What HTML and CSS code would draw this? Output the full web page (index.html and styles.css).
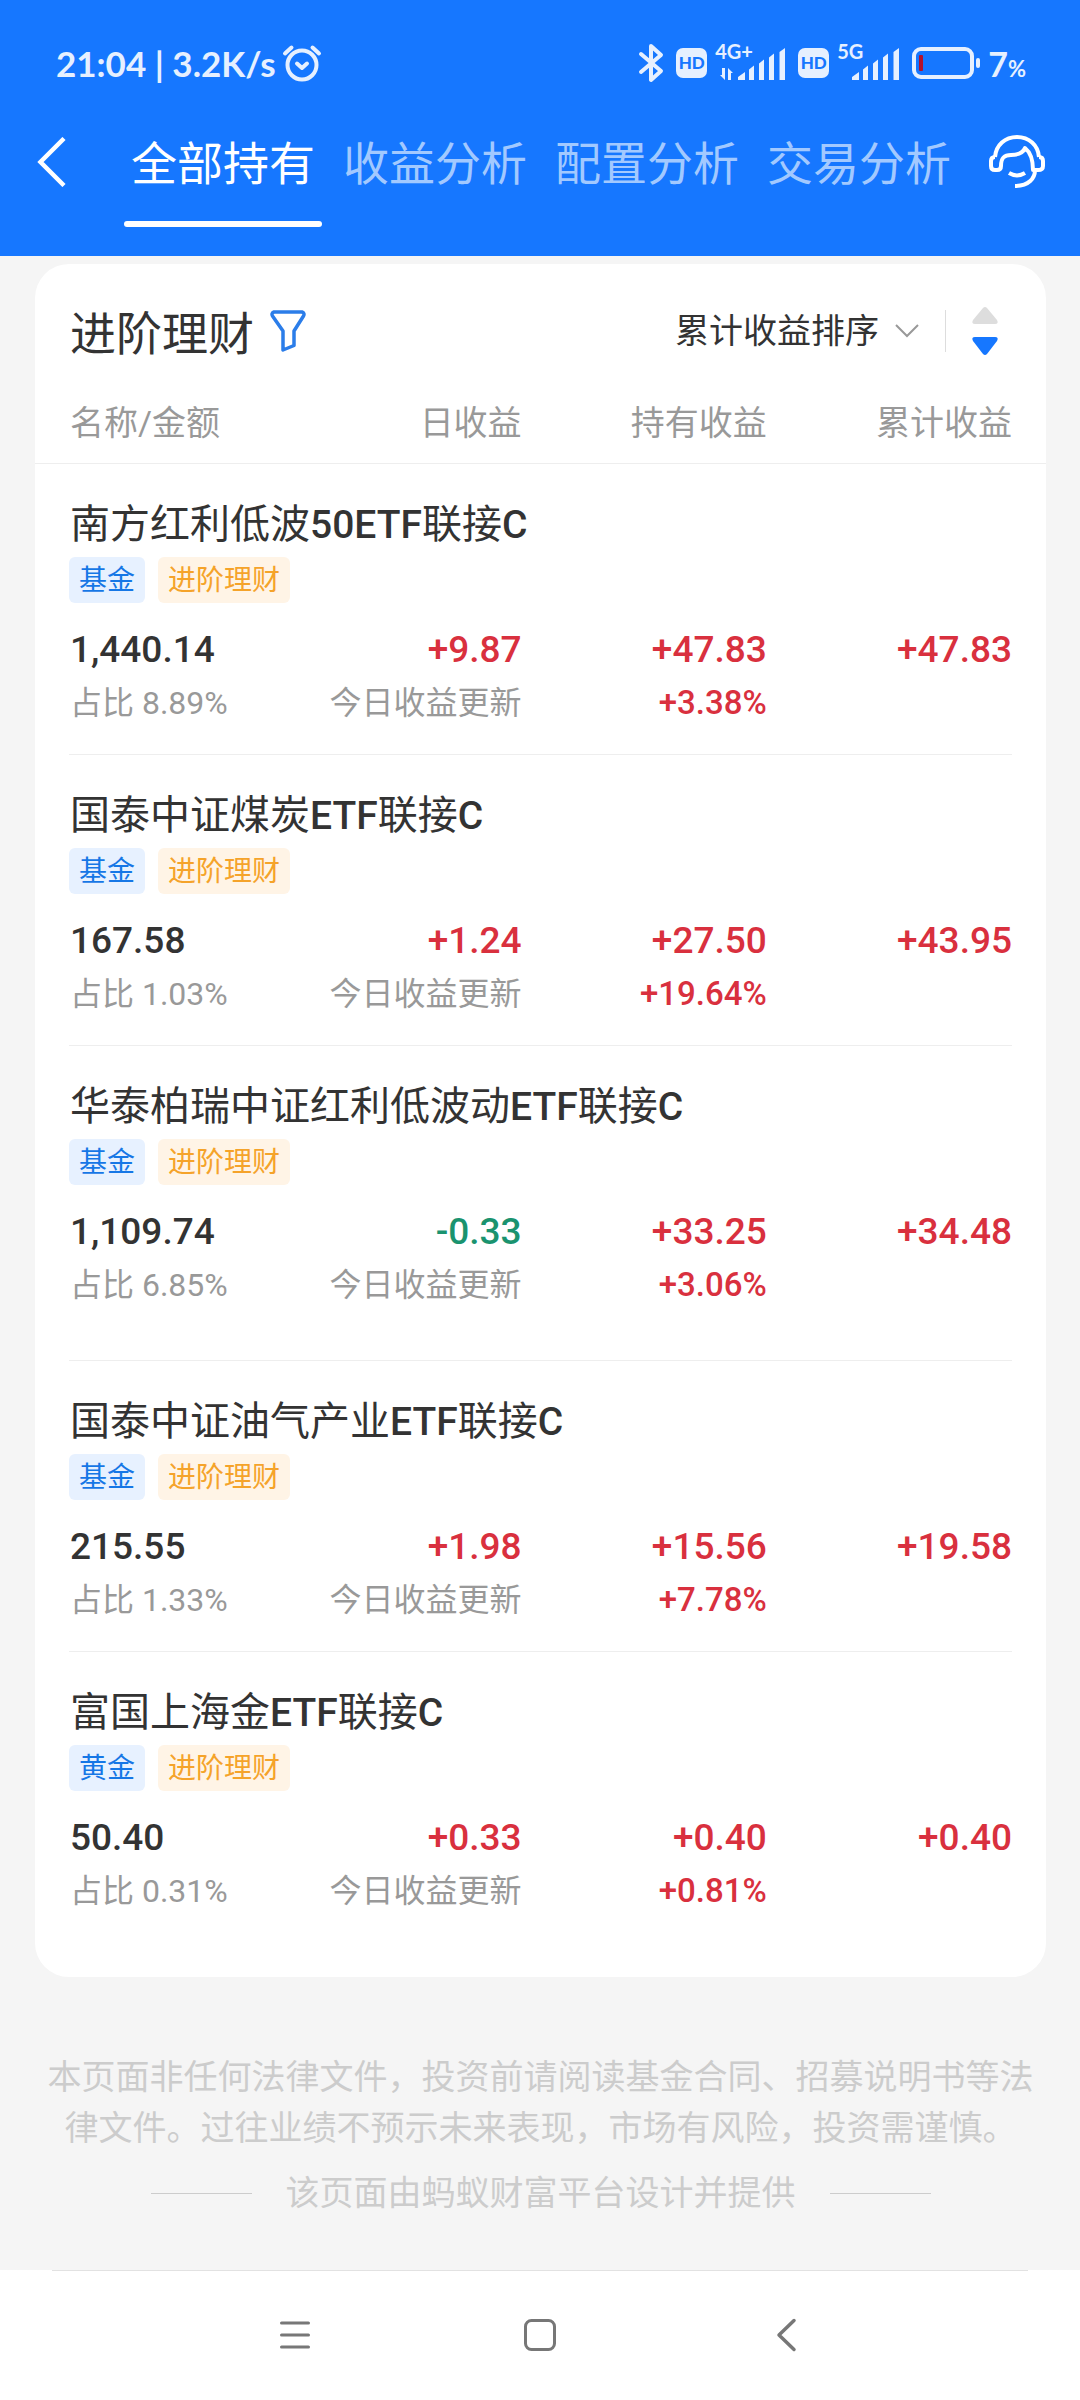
FILE: index.html
```html
<!DOCTYPE html>
<html lang="zh-CN">
<head>
<meta charset="utf-8">
<meta name="viewport" content="width=device-width">
<title>全部持有</title>
<link rel="stylesheet" href="styles.css">
</head>
<body>
<header class="top">
  <div class="status">
    <span class="status-time">21:04 | 3.2K/s</span>
    <svg class="status-alarm" width="40" height="40" viewBox="0 0 40 40" fill="none" stroke="currentColor" stroke-width="4" stroke-linecap="round" stroke-linejoin="round"><circle cx="20" cy="22" r="14.5"/><path d="M15 20.500l5 4.500 5-4.500"/><path d="M3 10.500l6.500-6M37 10.500l-6.500-6"/></svg>
    <div class="status-right">
      <svg width="26" height="40" viewBox="0 0 26 40" fill="none" stroke="currentColor" stroke-width="4" stroke-linejoin="round" stroke-linecap="round"><path d="M3 11l20 17-10 9V3l10 9L3 29"/></svg>
      <span class="hd">HD</span>
      <span class="signal">
        <span class="net">4G+</span>
        <svg width="71" height="34" viewBox="0 0 71 34" fill="currentColor"><path d="M7 22h3v12l-5-5h2zM13 34V22l5 5h-2v7z"/><path d="M23 34v-3l7-5v8zM34 23.500l5-4V34h-5zM44 17.500l5-4V34h-5zM54 11.500l5-4V34h-5zM64.500 6l5.500-4V34h-5.500z"/></svg>
      </span>
      <span class="hd">HD</span>
      <span class="signal">
        <span class="net">5G</span>
        <svg width="63" height="34" viewBox="0 0 63 34" fill="currentColor"><path d="M15 34v-3l7-5v8zM26 23.500l5-4V34h-5zM36 17.500l5-4V34h-5zM46 11.500l5-4V34h-5zM56.500 6l5.500-4V34h-5.500z"/></svg>
      </span>
      <svg class="battery" width="70" height="32" viewBox="0 0 70 32"><rect x="2" y="2" width="58" height="28" rx="7" fill="none" stroke="currentColor" stroke-width="4"/><rect x="7" y="8" width="4" height="16" rx="1" fill="#b3122d"/><rect x="64" y="11" width="4" height="10" rx="2" fill="currentColor"/></svg>
      <span class="level">7<small>%</small></span>
    </div>
  </div>
  <nav class="tabs">
    <button class="icon-btn" aria-label="返回"><svg width="30" height="50" viewBox="0 0 30 50" fill="none" stroke="currentColor" stroke-width="4.500"><path d="M27 1.500L3.500 25 27 48.500"/></svg></button>
    <div class="tab-list">
      <a class="tab active" href="#all">全部持有</a>
      <a class="tab" href="#profit">收益分析</a>
      <a class="tab" href="#allocation">配置分析</a>
      <a class="tab" href="#trade">交易分析</a>
    </div>
    <button class="icon-btn" aria-label="客服"><svg width="58" height="56" viewBox="8 10 58 56" fill="none" stroke="currentColor" stroke-width="4" stroke-linejoin="round"><path d="M15 33C16 21 25 13 37 13s21 8 22 20"/><path d="M15 33c-3 0-4 2-4 4v5c0 3 2 4 4 4h2c3 0 4-2 4-4 0-8 3-11 10-11 8 0 12-2 14-7 5 4 8 10 8 22h5c3 0 5-1 5-4v-5c0-2-1-4-4-4"/><path d="M55 46c0 8-6 16-20 16"/><path d="M29 49c5 3 11 3 16 0"/></svg></button>
  </nav>
</header>

<main class="main">
  <section class="card">
    <div class="card-head">
      <h1 class="card-title">进阶理财</h1>
      <button class="icon-btn filter" aria-label="筛选"><svg width="36" height="44" viewBox="0 0 36 44" fill="none" stroke="currentColor" stroke-width="3.500" stroke-linejoin="round"><path d="M4 3h28q3 1 1.500 4L24 22v14.500L13 41V22L2.500 7Q1 4 4 3z"/></svg></button>
      <button class="sort">累计收益排序<svg width="24" height="14" viewBox="0 0 24 14" fill="none" stroke="#999" stroke-width="2"><path d="M1 1l11 11L23 1"/></svg></button>
      <button class="icon-btn order" aria-label="降序"><svg width="28" height="50" viewBox="0 0 28 50"><path d="M12 2q2-2 4 0l10 12q2 4-2 4H4q-4 0-2-4z" fill="#ddd"/><path d="M12 48q2 2 4 0l10-13q2-4-2-4H4q-4 0-2 4z" fill="#1677ff"/></svg></button>
    </div>
    <table class="funds">
      <thead>
        <tr><th scope="col">名称/金额</th><th scope="col">日收益</th><th scope="col">持有收益</th><th scope="col">累计收益</th></tr>
      </thead>
      <tbody>
        <tr class="name"><th scope="rowgroup" colspan="4">南方红利低波<b>50ETF</b>联接<b>C</b><span class="tags"><span class="tag">基金</span><span class="tag gold">进阶理财</span></span></th></tr>
        <tr><td>1,440.14<small>占比 8.89%</small></td><td class="up">+9.87<small>今日收益更新</small></td><td class="up">+47.83<strong>+3.38%</strong></td><td class="up">+47.83</td></tr>
      </tbody>
      <tbody>
        <tr class="name"><th scope="rowgroup" colspan="4">国泰中证煤炭<b>ETF</b>联接<b>C</b><span class="tags"><span class="tag">基金</span><span class="tag gold">进阶理财</span></span></th></tr>
        <tr><td>167.58<small>占比 1.03%</small></td><td class="up">+1.24<small>今日收益更新</small></td><td class="up">+27.50<strong>+19.64%</strong></td><td class="up">+43.95</td></tr>
      </tbody>
      <tbody class="roomy">
        <tr class="name"><th scope="rowgroup" colspan="4">华泰柏瑞中证红利低波动<b>ETF</b>联接<b>C</b><span class="tags"><span class="tag">基金</span><span class="tag gold">进阶理财</span></span></th></tr>
        <tr><td>1,109.74<small>占比 6.85%</small></td><td class="down">-0.33<small>今日收益更新</small></td><td class="up">+33.25<strong>+3.06%</strong></td><td class="up">+34.48</td></tr>
      </tbody>
      <tbody>
        <tr class="name"><th scope="rowgroup" colspan="4">国泰中证油气产业<b>ETF</b>联接<b>C</b><span class="tags"><span class="tag">基金</span><span class="tag gold">进阶理财</span></span></th></tr>
        <tr><td>215.55<small>占比 1.33%</small></td><td class="up">+1.98<small>今日收益更新</small></td><td class="up">+15.56<strong>+7.78%</strong></td><td class="up">+19.58</td></tr>
      </tbody>
      <tbody>
        <tr class="name"><th scope="rowgroup" colspan="4">富国上海金<b>ETF</b>联接<b>C</b><span class="tags"><span class="tag">黄金</span><span class="tag gold">进阶理财</span></span></th></tr>
        <tr><td>50.40<small>占比 0.31%</small></td><td class="up">+0.33<small>今日收益更新</small></td><td class="up">+0.40<strong>+0.81%</strong></td><td class="up">+0.40</td></tr>
      </tbody>
    </table>
  </section>
  <footer class="notice">
    <p>本页面非任何法律文件，投资前请阅读基金合同、招募说明书等法律文件。过往业绩不预示未来表现，市场有风险，投资需谨慎。</p>
    <p class="provider">该页面由蚂蚁财富平台设计并提供</p>
  </footer>
</main>

<nav class="sysnav">
  <button class="icon-btn" aria-label="菜单"><svg width="36" height="36" viewBox="0 0 36 36" fill="none" stroke="currentColor" stroke-width="3" stroke-linecap="round"><path d="M4.500 6h27M4.500 18h27M4.500 30h27"/></svg></button>
  <button class="icon-btn" aria-label="主页"><svg width="36" height="36" viewBox="0 0 36 36" fill="none" stroke="currentColor" stroke-width="3"><rect x="3.500" y="3.500" width="29" height="29" rx="6"/></svg></button>
  <button class="icon-btn" aria-label="返回"><svg width="36" height="36" viewBox="0 0 36 36" fill="none" stroke="currentColor" stroke-width="3.500" stroke-linecap="round" stroke-linejoin="round"><path d="M27 3.500L12 18l15 14.500"/></svg></button>
</nav>
</body>
</html>
```
FILE: styles.css
```css
* { box-sizing: border-box; }

body {
  margin: 0;
  min-height: 100vh;
  display: flex;
  flex-direction: column;
  background: #f5f5f5;
  color: #333;
  font-family: Roboto, "Noto Sans CJK SC", sans-serif;
  font-size: 34px;
}

button {
  margin: 0;
  padding: 0;
  border: 0;
  background: none;
  color: inherit;
  font: inherit;
}

svg { display: block; flex: none; }
a { color: inherit; text-decoration: none; }
.icon-btn { flex: none; }

/* Blue header */
.top {
  height: 256px;
  background: #1677ff;
  color: #fff;
}

.status {
  display: flex;
  align-items: center;
  height: 126px;
  padding: 0 54px 0 56px;
  color: #e6f0ff;
  font-family: Lato, "Noto Sans CJK SC", sans-serif;
}
.status-time { font-size: 35px; font-weight: 700; }
.status-alarm { margin-left: 6px; }
.status-right {
  display: flex;
  align-items: center;
  margin-left: auto;
}
.hd {
  width: 31px;
  height: 30px;
  margin-left: 12px;
  border-radius: 7px;
  background: #e6f0ff;
  color: #1677ff;
  font-size: 17px;
  font-weight: 900;
  line-height: 30px;
  text-align: center;
}
.signal { position: relative; margin-left: 8px; }
.net {
  position: absolute;
  left: 0;
  top: -5px;
  font-size: 20px;
  font-weight: 700;
  line-height: 20px;
}
.battery { margin-left: 12px; }
.level {
  margin-left: 6px;
  font-size: 34px;
  font-weight: 700;
}
.level small { font-size: 22px; }

.tabs {
  display: flex;
  align-items: center;
  height: 76px;
  padding: 0 34px 0 37px;
}
.tabs .icon-btn { padding-bottom: 4px; }
.tab-list {
  flex: 1;
  display: flex;
  gap: 14px;
  margin-left: 57px;
}
.tab {
  position: relative;
  padding: 0 7px;
  color: #a2c9ff;
  font-size: 46px;
  line-height: 76px;
}
.tab.active { color: #fff; }
.tab.active::after {
  content: "";
  position: absolute;
  right: 0;
  bottom: -25px;
  left: 0;
  height: 6px;
  border-radius: 3px;
  background: #fff;
}

/* Holdings card */
.main { flex: 1; padding: 8px 34px 0 35px; }
.card { border-radius: 34px; background: #fff; }
.card-head {
  display: flex;
  align-items: center;
  height: 134px;
  padding: 0 47px 0 35px;
}
.card-title { margin: 0; padding-bottom: 2px; font-size: 46px; font-weight: 400; }
.filter { margin-left: 16px; color: #2b7de9; }
.sort {
  display: flex;
  align-items: center;
  gap: 16px;
  margin-left: auto;
  padding-right: 26px;
  line-height: 42px;
  border-right: 1px solid #ddd;
}
.order { margin-left: 25px; }

.funds, .funds thead, .funds tbody, .name, .name th { display: block; }
.funds tr:not(.name) {
  display: grid;
  grid-template-columns: 24fr 24fr 26fr 26fr;
}
.funds th, .funds td {
  padding: 0;
  font-weight: 400;
  text-align: left;
}
.funds tr:not(.name) > :not(:first-child) { text-align: right; }
.funds tr > :first-child { padding-left: 1px; }
.funds thead {
  padding: 0 34px;
  border-bottom: 1px solid #eee;
  color: #999;
  line-height: 50px;
}
.funds thead tr { padding-bottom: 15px; }
.funds tbody {
  margin: 0 34px;
  padding: 33px 0 29px;
  border-bottom: 1px solid #eee;
}
.funds tbody.roomy { padding-bottom: 53px; }
.funds tbody:last-child { padding-bottom: 64px; border-bottom: 0; }

.funds .name th { font-size: 40px; line-height: 56px; }
.name b { font-size: 39px; font-weight: 500; }
.tags { display: flex; gap: 13px; margin: 4px 0 0 -1px; }
.tag {
  padding: 2px 10px 0;
  border-radius: 6px;
  background: #e7f1ff;
  color: #1677e6;
  font-size: 28px;
  line-height: 44px;
}
.tag.gold { background: #fff4e6; color: #f5a32a; }

.funds td {
  padding-top: 23px;
  font-size: 37px;
  font-weight: 500;
  line-height: 48px;
}
.funds td small, .funds td strong {
  display: block;
  margin-top: 7px;
  line-height: 44px;
}
.funds td small { color: #999; font-size: 32px; font-weight: 400; }
.funds td strong { font-size: 33px; font-weight: 500; }
.up { color: #d9303e; }
.down { color: #1a936f; }

/* Legal notice */
.notice {
  padding: 75px 6px 51px;
  color: #ccc;
  line-height: 51px;
  text-align: center;
}
.notice p { margin: 0; }
.notice .provider {
  display: flex;
  align-items: center;
  justify-content: center;
  gap: 34px;
  margin-top: 14px;
}
.provider::before, .provider::after {
  content: "";
  width: 101px;
  height: 1px;
  background: #ccc;
}

/* System navigation */
.sysnav {
  position: relative;
  display: grid;
  grid-template-columns: repeat(3, 1fr);
  align-items: center;
  justify-items: center;
  height: 130px;
  padding: 0 16%;
  background: #fff;
  color: #777;
}
.sysnav::before {
  content: "";
  position: absolute;
  top: 0;
  right: 52px;
  left: 52px;
  height: 1px;
  background: #e2e2e2;
}
```
